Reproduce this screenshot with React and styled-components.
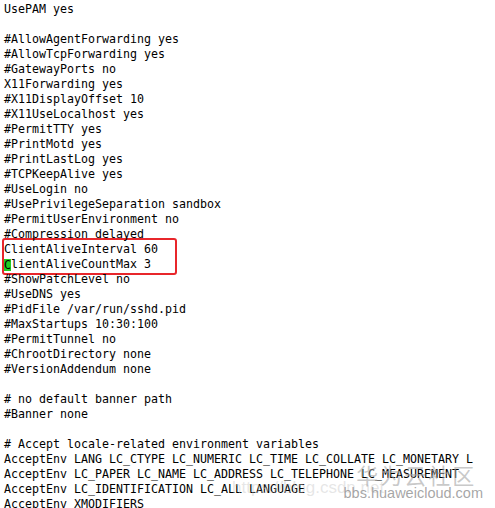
import React from 'react';
import styled, { createGlobalStyle } from 'styled-components';

const GlobalStyle = createGlobalStyle`
    html, body {
        margin: 0;
        padding: 0;
        background: #ffffff;
    }
`;

const Screen = styled.div`
    position: relative;
    width: 495px;
    height: 508px;
    overflow: hidden;
    background: #ffffff;
    padding: 2px 0 0 4px;
    box-sizing: border-box;
`;

const Code = styled.div`
    font-family: 'DejaVu Sans Mono', 'Liberation Mono', monospace;
    font-size: 11.63px;
    line-height: 15px;
    color: #000000;
    white-space: pre;
`;

const Line = styled.div`
    height: 15px;
`;

const Highlight = styled.div`
    width: 171px;
    margin: -4px 0 -3px -2px;
    padding: 2px 0 1px 0;
    border: 2px solid #e8262b;
    border-radius: 3px;
`;

const Cursor = styled.span`
    display: inline-block;
    background: #22cc22;
    line-height: 13px;
    height: 12px;
    vertical-align: -1px;
`;

// faint blog watermark across the bottom lines
const BlogMark = styled.div`
    position: absolute;
    left: 232px;
    top: 478px;
    font-family: 'Liberation Sans', Arial, sans-serif;
    font-size: 17px;
    color: rgba(200, 200, 200, 0.45);
    white-space: nowrap;
`;

// huawei cloud community stamp
const Stamp = styled.div`
    position: absolute;
    right: 12px;
    bottom: 8px;
    display: flex;
    flex-direction: column;
    align-items: center;
`;

const StampTitle = styled.div`
    font-family: 'Noto Sans CJK SC', sans-serif;
    font-size: 22px;
    line-height: 24px;
    letter-spacing: 2px;
    padding-left: 6px;
    color: rgba(165, 165, 165, 0.6);
    white-space: nowrap;
`;

const StampUrl = styled.div`
    font-family: 'Liberation Sans', Arial, sans-serif;
    font-size: 14.5px;
    line-height: 14px;
    color: rgba(150, 150, 150, 0.85);
    white-space: nowrap;
`;

const before = [
    'UsePAM yes',
    '',
    '#AllowAgentForwarding yes',
    '#AllowTcpForwarding yes',
    '#GatewayPorts no',
    'X11Forwarding yes',
    '#X11DisplayOffset 10',
    '#X11UseLocalhost yes',
    '#PermitTTY yes',
    '#PrintMotd yes',
    '#PrintLastLog yes',
    '#TCPKeepAlive yes',
    '#UseLogin no',
    '#UsePrivilegeSeparation sandbox',
    '#PermitUserEnvironment no',
    '#Compression delayed',
];

const after = [
    '#ShowPatchLevel no',
    '#UseDNS yes',
    '#PidFile /var/run/sshd.pid',
    '#MaxStartups 10:30:100',
    '#PermitTunnel no',
    '#ChrootDirectory none',
    '#VersionAddendum none',
    '',
    '# no default banner path',
    '#Banner none',
    '',
    '# Accept locale-related environment variables',
    'AcceptEnv LANG LC_CTYPE LC_NUMERIC LC_TIME LC_COLLATE LC_MONETARY L',
    'AcceptEnv LC_PAPER LC_NAME LC_ADDRESS LC_TELEPHONE LC_MEASUREMENT',
    'AcceptEnv LC_IDENTIFICATION LC_ALL LANGUAGE',
    'AcceptEnv XMODIFIERS',
];

const App = () => {
    return (
        <Screen>
            <GlobalStyle />
            <Code>
                {before.map((l, i) => <Line key={'b' + i}>{l}</Line>)}
                <Highlight>
                    <Line>ClientAliveInterval 60</Line>
                    <Line><Cursor>C</Cursor>lientAliveCountMax 3</Line>
                </Highlight>
                {after.map((l, i) => <Line key={'a' + i}>{l}</Line>)}
            </Code>
            <BlogMark>https://blog.csdn.net</BlogMark>
            <Stamp>
                <StampTitle>华为云社区</StampTitle>
                <StampUrl>bbs.huaweicloud.com</StampUrl>
            </Stamp>
        </Screen>
    );
};

export default App;
